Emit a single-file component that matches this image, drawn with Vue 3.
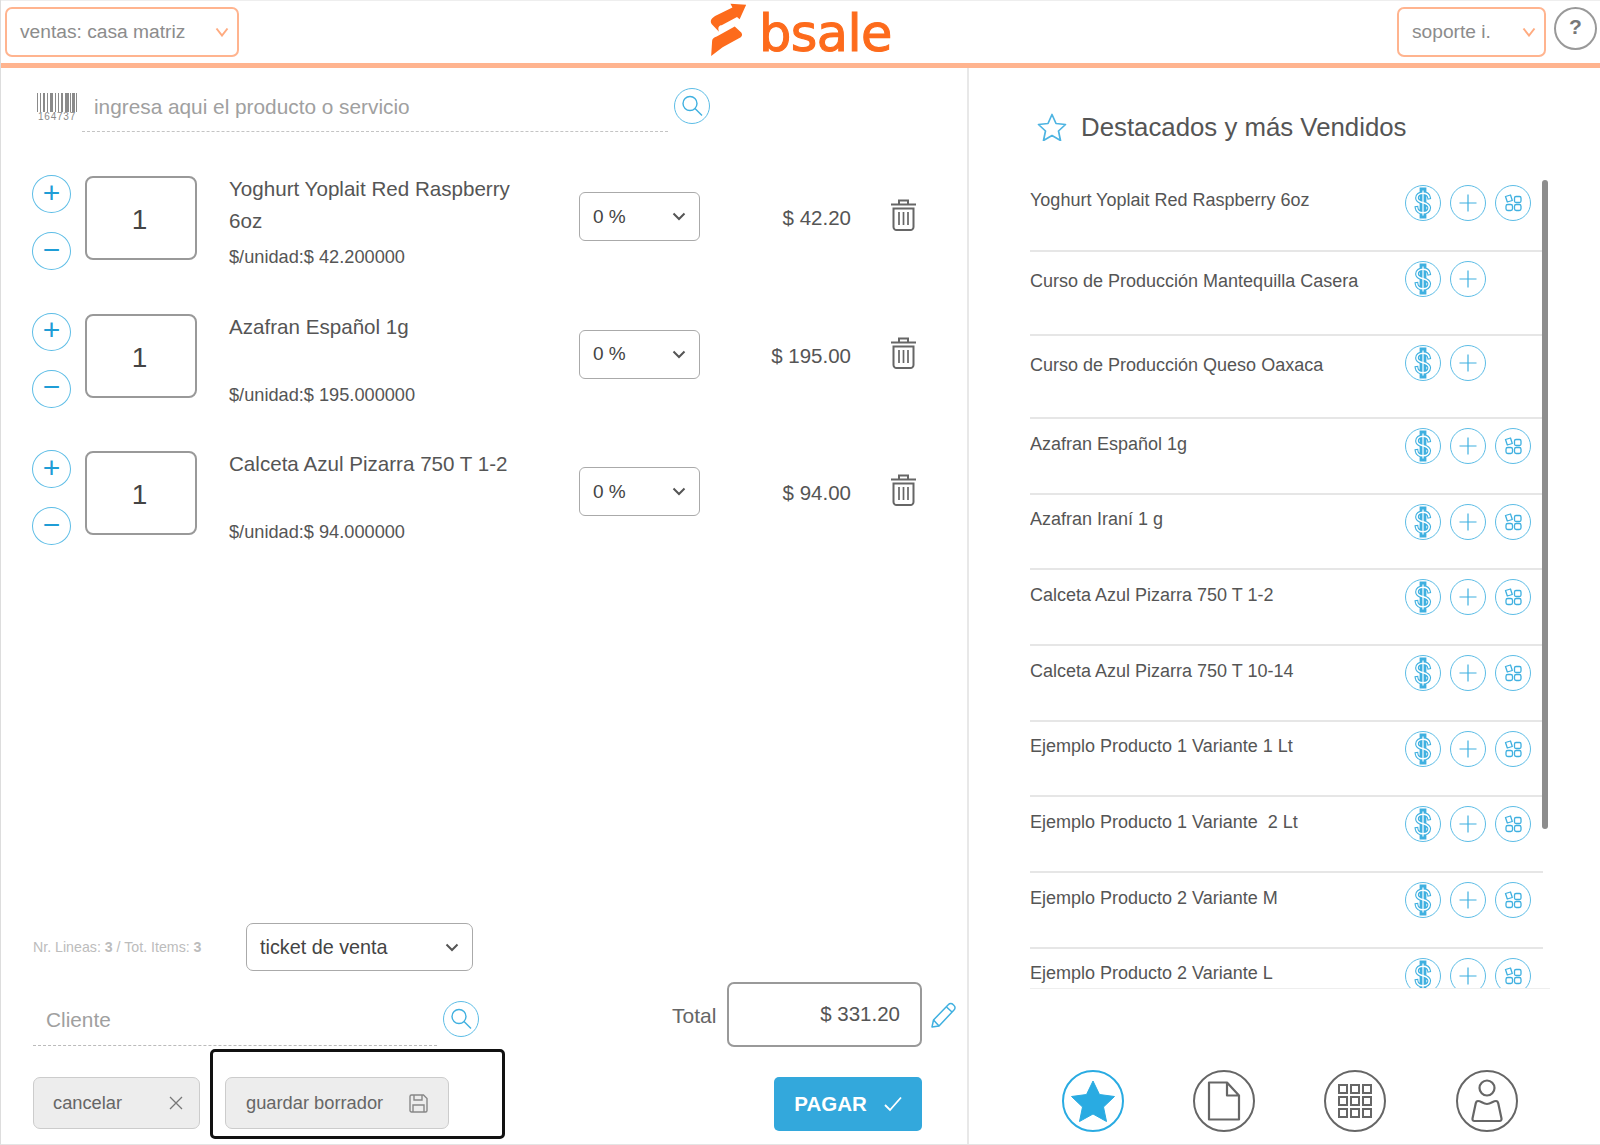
<template>
  <div class="app">
    <!-- iconos compartidos -->
    <svg class="defs" width="0" height="0" aria-hidden="true">
      <symbol id="i-dollar" viewBox="0 0 36 36">
        <path d="M24 12.500c-.5-2.800-3.200-4.300-6-4.300-3.500 0-6 2-6 4.800 0 6.300 12.200 3.300 12.200 9.800 0 3-2.800 5-6.200 5-3.200 0-6-1.700-6.400-4.800M16.500 4.500v27M19.500 4.500v27" fill="none" stroke="#3fb0e0" stroke-width="3.800" stroke-linecap="square"/>
        <path d="M24 12.500c-.5-2.800-3.200-4.300-6-4.300-3.500 0-6 2-6 4.800 0 6.300 12.200 3.300 12.200 9.800 0 3-2.800 5-6.200 5-3.200 0-6-1.700-6.400-4.800" fill="none" stroke="#fff" stroke-width="1.600" stroke-linecap="square"/>
        <path d="M18 5.500v25" fill="none" stroke="#fff" stroke-width="1.200"/>
      </symbol>
      <symbol id="i-plus" viewBox="0 0 36 36">
        <path d="M18 9.500v17M9.500 18h17" fill="none" stroke="#3fb0e0" stroke-width="1.200"/>
      </symbol>
      <symbol id="i-variants" viewBox="0 0 36 36">
        <g fill="none" stroke="#3fb0e0" stroke-width="1.300">
          <rect x="19.500" y="11.500" width="6.500" height="6" rx="1.500"/>
          <rect x="11" y="19.500" width="6.500" height="6" rx="1.800"/>
          <rect x="19.500" y="19.500" width="6.500" height="6" rx="1.800"/>
          <path d="M10.500 11.500l5-1.500 1.800 5.500-5 1.500z" stroke-linejoin="round"/>
        </g>
      </symbol>
      <symbol id="i-search" viewBox="0 0 36 36">
        <circle cx="16" cy="15.500" r="7" fill="none" stroke="#3fb0e0" stroke-width="1.400"/>
        <path d="M21 20.500l7 7" fill="none" stroke="#3fb0e0" stroke-width="1.400"/>
      </symbol>
      <symbol id="i-trash" viewBox="0 0 27 32">
        <g fill="none" stroke="#666" stroke-width="2">
          <path d="M9 5V1.500h9V5M1 5.500h25"/>
          <path d="M3.500 9.500h20v18.500a3 3 0 0 1-3 3h-14a3 3 0 0 1-3-3z"/>
          <path d="M9 13v13M13.500 13v13M18 13v13" stroke-width="1.700"/>
        </g>
      </symbol>
    </svg>

    <header class="topbar">
      <div class="top-select top-select-branch">
        <span>ventas: casa matriz</span>
        <svg class="chev" width="14" height="10" viewBox="0 0 14 10"><path d="M1.500 1.500L7 8.500l5.500-7" fill="none" stroke="#ffab80" stroke-width="2"/></svg>
      </div>
      <div class="logo">
        <svg class="logo-mark" width="37" height="54" viewBox="90 10 112 165">
          <path d="M200 15l-48-3 6 12-53 26c-15 10-15 17-10 25l22 23c-5-13 0-20 8-20l47-25 8 7z" fill="#fd6b1c"/>
          <path d="M165 82l20 18c5 8 2 13-7 18l-50 27-35 27 3-47c1-7 5-10 14-13z" fill="#fd6b1c"/>
        </svg>
        <span class="logo-text">bsale</span>
      </div>
      <div class="top-select top-select-user">
        <span>soporte i.</span>
        <svg class="chev" width="14" height="10" viewBox="0 0 14 10"><path d="M1.500 1.500L7 8.500l5.500-7" fill="none" stroke="#ffab80" stroke-width="2"/></svg>
      </div>
      <div class="help">?</div>
    </header>

    <div class="body">
      <main class="sale">
        <div class="search-row">
          <div class="barcode">
            <svg width="40" height="19" viewBox="0 0 40 19">
              <rect v-for="b in barcode" :key="b[0]" :x="b[0]" y="0" :width="b[1]" height="19" fill="#8a8a8a"/>
            </svg>
            <span>164737</span>
          </div>
          <div class="search-field">ingresa aqui el producto o servicio</div>
          <span class="round round-md"><svg width="36" height="36"><use href="#i-search"/></svg></span>
        </div>

        <div class="lines">
          <div v-for="line in lines" :key="line.name" class="line">
            <div class="steppers">
              <span class="round step">+</span>
              <span class="round step">−</span>
            </div>
            <div class="qty">1</div>
            <div class="info">
              <div class="info-name">{{ line.name }}</div>
              <div class="info-unit">$/unidad:$ {{ line.unit }}</div>
            </div>
            <div class="discount">
              <span>0 %</span>
              <svg width="14" height="9" viewBox="0 0 14 9"><path d="M1.500 1.500L7 7l5.500-5.500" fill="none" stroke="#555" stroke-width="2"/></svg>
            </div>
            <div class="price">$ {{ line.price }}</div>
            <svg class="trash" width="27" height="32"><use href="#i-trash"/></svg>
          </div>
        </div>

        <footer class="sale-footer">
          <div class="footer-left">
            <div class="stats-row">
              <div class="stats">Nr. Lineas: <b>3</b> / Tot. Items: <b>3</b></div>
              <div class="doc-select">
                <span>ticket de venta</span>
                <svg width="14" height="9" viewBox="0 0 14 9"><path d="M1.500 1.500L7 7l5.500-5.500" fill="none" stroke="#555" stroke-width="2"/></svg>
              </div>
            </div>
            <div class="client-row">
              <div class="client-field">Cliente</div>
              <span class="round round-md"><svg width="36" height="36"><use href="#i-search"/></svg></span>
            </div>
            <div class="actions">
              <button class="btn btn-cancel">
                <span>cancelar</span>
                <svg width="14" height="14" viewBox="0 0 14 14"><path d="M1 1l12 12M13 1L1 13" stroke="#777" stroke-width="1.300"/></svg>
              </button>
              <div class="draft-frame">
                <button class="btn btn-draft">
                  <span>guardar borrador</span>
                  <svg width="19" height="19" viewBox="0 0 19 19">
                    <g fill="none" stroke="#888" stroke-width="1.400">
                      <path d="M1 2.500A1.500 1.500 0 0 1 2.500 1h12L18 4.500v12a1.500 1.500 0 0 1-1.500 1.500h-14A1.500 1.500 0 0 1 1 16.500z"/>
                      <path d="M5 1v5h8V1M4 18v-7h11v7"/>
                    </g>
                  </svg>
                </button>
              </div>
            </div>
          </div>
          <div class="footer-right">
            <div class="total-row">
              <span class="total-label">Total</span>
              <div class="total-box">$ 331.20</div>
              <svg width="27" height="28" viewBox="0 0 27 28">
                <g fill="none" stroke="#3fb0e0" stroke-width="1.500" stroke-linejoin="round">
                  <path d="M2 26l1.500-7L18.500 3.500a3 3 0 0 1 4.500 0l1 1a3 3 0 0 1 0 4.500L9 25z"/>
                  <path d="M16.500 6l5.500 5M3.500 19L9 25"/>
                </g>
              </svg>
            </div>
            <button class="pay">
              <span>PAGAR</span>
              <svg width="18" height="16" viewBox="0 0 18 16"><path d="M1 9l5 5L17 1.500" fill="none" stroke="#fff" stroke-width="1.800"/></svg>
            </button>
          </div>
        </footer>
      </main>

      <aside class="side">
        <div class="side-title">
          <svg width="30" height="28" viewBox="0 0 30 28">
            <path d="M15 1.500l4 9 9.500 1-7 6.500 2 9.500-8.500-5-8.500 5 2-9.500-7-6.500 9.500-1z" fill="none" stroke="#4db4e2" stroke-width="1.700" stroke-linejoin="round"/>
          </svg>
          <span>Destacados y más Vendidos</span>
        </div>

        <div class="list-wrap">
          <div class="list">
            <div v-for="(p, i) in products" :key="p.name" class="prod" :class="{ 'prod-short': p.noVariants, 'prod-first': i === 0 }">
              <div class="prod-name">{{ p.name }}</div>
              <div class="prod-icons">
                <span class="round round-sm"><svg width="36" height="36"><use href="#i-dollar"/></svg></span>
                <span class="round round-sm"><svg width="36" height="36"><use href="#i-plus"/></svg></span>
                <span v-if="!p.noVariants" class="round round-sm"><svg width="36" height="36"><use href="#i-variants"/></svg></span>
              </div>
            </div>
          </div>
          <div class="scrollbar"></div>
        </div>

        <nav class="side-nav">
          <span class="nav-btn nav-btn-active">
            <svg width="44" height="42" viewBox="0 0 44 42"><path d="M22 1l6.500 13.500 15 2-11 10.500 3 14.500L22 34l-13.500 7.500 3-14.500L.5 16.500l15-2z" fill="#29abe2" stroke="#29abe2" stroke-linejoin="round"/></svg>
          </span>
          <span class="nav-btn">
            <svg width="34" height="40" viewBox="0 0 34 40"><path d="M2 1.500h18l12 13v24H2zM20 1.500v13h12" fill="none" stroke="#666" stroke-width="2.200" stroke-linejoin="round"/></svg>
          </span>
          <span class="nav-btn">
            <svg width="36" height="36" viewBox="0 0 36 36">
              <rect v-for="c in gridCells" :key="c.join()" :x="c[0]" :y="c[1]" width="8" height="8" fill="none" stroke="#666" stroke-width="2"/>
            </svg>
          </span>
          <span class="nav-btn nav-btn-last">
            <svg width="32" height="44" viewBox="0 0 32 44"><g fill="none" stroke="#666" stroke-width="2.200" stroke-linejoin="round"><circle cx="16" cy="9" r="7.500"/><path d="M7 22c3 0 5 3 9 3s6-3 9-3c1 0 2 1 2.300 2.500l3.200 15c.2 1.500-.5 2.500-2 2.500H3.500c-1.500 0-2.200-1-2-2.500l3.200-15C5 23 6 22 7 22z"/></g></svg>
          </span>
        </nav>
      </aside>
    </div>
  </div>
</template>

<script setup>
const lines = [
  { name: 'Yoghurt Yoplait Red Raspberry 6oz', unit: '42.200000', price: '42.20' },
  { name: 'Azafran Español 1g', unit: '195.000000', price: '195.00' },
  { name: 'Calceta Azul Pizarra 750 T 1-2', unit: '94.000000', price: '94.00' },
]

const products = [
  { name: 'Yoghurt Yoplait Red Raspberry 6oz' },
  { name: 'Curso de Producción Mantequilla Casera', noVariants: true },
  { name: 'Curso de Producción Queso Oaxaca', noVariants: true },
  { name: 'Azafran Español 1g' },
  { name: 'Azafran Iraní 1 g' },
  { name: 'Calceta Azul Pizarra 750 T 1-2' },
  { name: 'Calceta Azul Pizarra 750 T 10-14' },
  { name: 'Ejemplo Producto 1 Variante 1 Lt' },
  { name: 'Ejemplo Producto 1 Variante  2 Lt' },
  { name: 'Ejemplo Producto 2 Variante M' },
  { name: 'Ejemplo Producto 2 Variante L' },
]

// [x, ancho] de cada barra del codigo
const barcode = [
  [0, 1], [3, 1], [6, 2], [10, 1], [13, 3], [18, 1], [21, 1], [24, 2], [28, 4], [33, 1], [35, 3], [39, 1],
]

const gridCells = []
for (let y = 0; y < 3; y++) {
  for (let x = 0; x < 3; x++) gridCells.push([2 + x * 12, 2 + y * 12])
}
</script>

<style>
html, body { margin: 0; background: #fff; }
</style>

<style scoped>
.app {
  width: 1600px;
  height: 1145px;
  box-sizing: border-box;
  display: flex;
  flex-direction: column;
  overflow: hidden;
  border-left: 1px solid #ddd;
  border-bottom: 1px solid #e4e4e4;
  font-family: "Liberation Sans", Arial, sans-serif;
  color: #555;
  background: #fff;
}
.defs { position: absolute; }
button { font-family: inherit; }

.topbar {
  height: 68px;
  box-sizing: border-box;
  flex: none;
  display: flex;
  align-items: flex-start;
  border-top: 1px solid #eee;
  border-bottom: 5px solid #ffb48f;
  padding-top: 6px;
}
.top-select {
  height: 50px;
  box-sizing: border-box;
  display: flex;
  align-items: center;
  justify-content: space-between;
  border: 2px solid #ffb48f;
  border-radius: 7px;
  padding: 0 8px 0 13px;
  font-size: 19.200px;
  color: #8c8c8c;
}
.top-select-branch { width: 234px; margin-left: 4px; }
.top-select-user { width: 149px; margin-left: 0; }
.logo {
  width: 1158px;
  box-sizing: border-box;
  padding-left: 471px;
  display: flex;
  align-items: flex-start;
  gap: 12px;
  margin-top: -3px;
}
.logo-mark { margin-top: -1px; }
.logo-text {
  font-family: "DejaVu Sans", sans-serif;
  font-size: 51px;
  line-height: 60px;
  letter-spacing: -.6px;
  color: #fd6b1c;
  -webkit-text-stroke: 1.100px #fd6b1c;
}
.help {
  width: 43px;
  height: 43px;
  box-sizing: border-box;
  margin-left: 8px;
  border: 2px solid #999;
  border-radius: 50%;
  text-align: center;
  line-height: 36px;
  font-size: 21px;
  font-weight: 700;
  color: #777;
}

.body { flex: 1; display: flex; min-height: 0; }
.sale {
  width: 968px;
  box-sizing: border-box;
  border-right: 2px solid #e8e8e8;
  display: flex;
  flex-direction: column;
}

.round {
  box-sizing: border-box;
  display: inline-flex;
  align-items: center;
  justify-content: center;
  flex: none;
  border: 1.500px solid #5dbde6;
  border-radius: 50%;
  background: #fff;
}
.round-md, .round-sm { width: 36px; height: 36px; }
.round svg { flex: none; margin: -2px; }

.search-row {
  display: flex;
  align-items: flex-start;
  padding: 20px 0 0 36px;
}
.barcode {
  width: 40px;
  margin-top: 5px;
  height: 27px;
  text-align: center;
  font-size: 10px;
  line-height: 9px;
  color: #888;
  letter-spacing: .8px;
}
.barcode svg { display: block; }
.search-field {
  width: 586px;
  height: 44px;
  box-sizing: border-box;
  margin: 0 6px 0 5px;
  padding-left: 12px;
  line-height: 38px;
  font-size: 20.800px;
  color: #a0a0a0;
  border-bottom: 1px dashed #c4c4c4;
}

.lines { flex: 1; margin-top: 41px; }
.line {
  height: 137.500px;
  display: flex;
  align-items: flex-start;
  padding-left: 31px;
}
.steppers { display: flex; flex-direction: column; gap: 19px; width: 39px; margin-top: 2px; }
.step {
  width: 39px;
  height: 38px;
  font-size: 30px;
  line-height: 1;
  color: #1f9dd6;
  padding-bottom: 3px;
}
.qty {
  width: 112px;
  height: 84px;
  box-sizing: border-box;
  margin: 3px 0 0 14px;
  padding-right: 3px;
  border: 2px solid #999;
  border-radius: 8px;
  text-align: center;
  line-height: 83px;
  font-size: 28px;
  color: #444;
}
.info { width: 350px; margin-left: 32px; }
.info-name {
  width: 300px;
  height: 64px;
  font-size: 20.600px;
  line-height: 32px;
}
.info-unit { margin-top: 10px; font-size: 18.200px; line-height: 20px; }
.discount {
  width: 121px;
  height: 49px;
  box-sizing: border-box;
  margin-top: 19px;
  display: flex;
  align-items: center;
  justify-content: space-between;
  padding: 0 13px;
  border: 1px solid #aaa;
  border-radius: 6px;
  font-size: 19px;
  color: #444;
}
.price {
  width: 151px;
  margin-top: 29px;
  text-align: right;
  font-size: 20.500px;
  line-height: 32px;
}
.trash { flex: none; margin: 26px 0 0 39px; }

.sale-footer {
  height: 221px;
  flex: none;
  display: flex;
  padding-left: 32px;
}
.footer-left { width: 469px; flex: none; }
.stats-row { display: flex; align-items: center; height: 48px; }
.stats { width: 213px; font-size: 14.200px; color: #bcbcbc; }
.doc-select {
  width: 227px;
  height: 48px;
  box-sizing: border-box;
  display: flex;
  align-items: center;
  justify-content: space-between;
  padding: 0 13px;
  border: 1px solid #aaa;
  border-radius: 7px;
  font-size: 19.800px;
  color: #444;
}
.client-row { display: flex; margin-top: 25px; }
.client-field {
  width: 404px;
  height: 50px;
  box-sizing: border-box;
  padding-left: 13px;
  line-height: 48px;
  font-size: 20.800px;
  color: #a0a0a0;
  border-bottom: 1px dashed #bbb;
}
.client-row .round { margin: 5px 0 0 6px; }
.actions { display: flex; align-items: flex-start; margin-top: 3px; }
.btn {
  height: 52px;
  box-sizing: border-box;
  display: flex;
  align-items: center;
  justify-content: space-between;
  border: 1px solid #ccc;
  border-radius: 7px;
  background: #ededed;
  font-size: 18.300px;
  color: #666;
}
.btn-cancel { width: 167px; margin-top: 28px; padding: 0 16px 0 19px; flex: none; }
.draft-frame {
  width: 295px;
  height: 90px;
  box-sizing: border-box;
  flex: none;
  margin-left: 10px;
  padding: 25px 0 0 12px;
  border: 3px solid #111;
  border-radius: 5px;
}
.btn-draft { width: 224px; padding: 0 20px; }

.footer-right { margin: 59px 0 0 170px; }
.total-row { display: flex; align-items: center; }
.total-label { width: 55px; font-size: 21px; color: #666; padding-top: 3px; }
.total-box {
  width: 195px;
  height: 65px;
  box-sizing: border-box;
  margin-right: 8px;
  padding-right: 20px;
  border: 2px solid #999;
  border-radius: 7px;
  text-align: right;
  line-height: 60px;
  font-size: 20.500px;
}
.pay {
  width: 148px;
  height: 54px;
  margin: 30px 0 0 102px;
  display: flex;
  align-items: center;
  justify-content: center;
  gap: 17px;
  border: none;
  border-radius: 5px;
  background: #33a8dc;
  color: #fff;
  font-size: 20.500px;
  font-weight: 700;
}

.side { flex: 1; padding-left: 61px; position: relative; }
.side-title {
  display: flex;
  align-items: center;
  gap: 14px;
  height: 38px;
  margin: 40px 0 30px 7px;
  font-size: 25.800px;
  color: #555;
}
.side-title svg { flex: none; }
.list-wrap {
  position: relative;
  width: 520px;
  height: 813px;
  box-sizing: border-box;
  border-bottom: 1px solid #eee;
  overflow: hidden;
}
.list { width: 513px; }
.prod {
  height: 75.700px;
  box-sizing: border-box;
  display: flex;
  justify-content: space-between;
  align-items: flex-start;
  padding: 9px 12px 0 0;
  border-bottom: 2px solid #e6e6e6;
}
.prod-short { height: 83.500px; }
.prod-first { height: 76px; }
.prod-name {
  margin-top: 5.500px;
  font-size: 18px;
  line-height: 20px;
  white-space: pre-wrap;
}
.prod-first .prod-name { margin-top: 5px; }
.prod-short .prod-name { margin-top: 10px; }
.prod-icons { width: 126px; display: flex; gap: 9px; }
.scrollbar {
  position: absolute;
  top: 4px;
  left: 512px;
  width: 6px;
  height: 649px;
  border-radius: 3px;
  background: #8d8d8d;
}
.side-nav {
  display: flex;
  gap: 69px;
  margin: 81px 0 0 32px;
}
.nav-btn {
  width: 62px;
  height: 62px;
  box-sizing: border-box;
  display: flex;
  align-items: center;
  justify-content: center;
  border: 2.500px solid #666;
  border-radius: 50%;
}
.nav-btn-active { border-color: #29abe2; }
.nav-btn-last { margin-left: 1px; }
</style>
